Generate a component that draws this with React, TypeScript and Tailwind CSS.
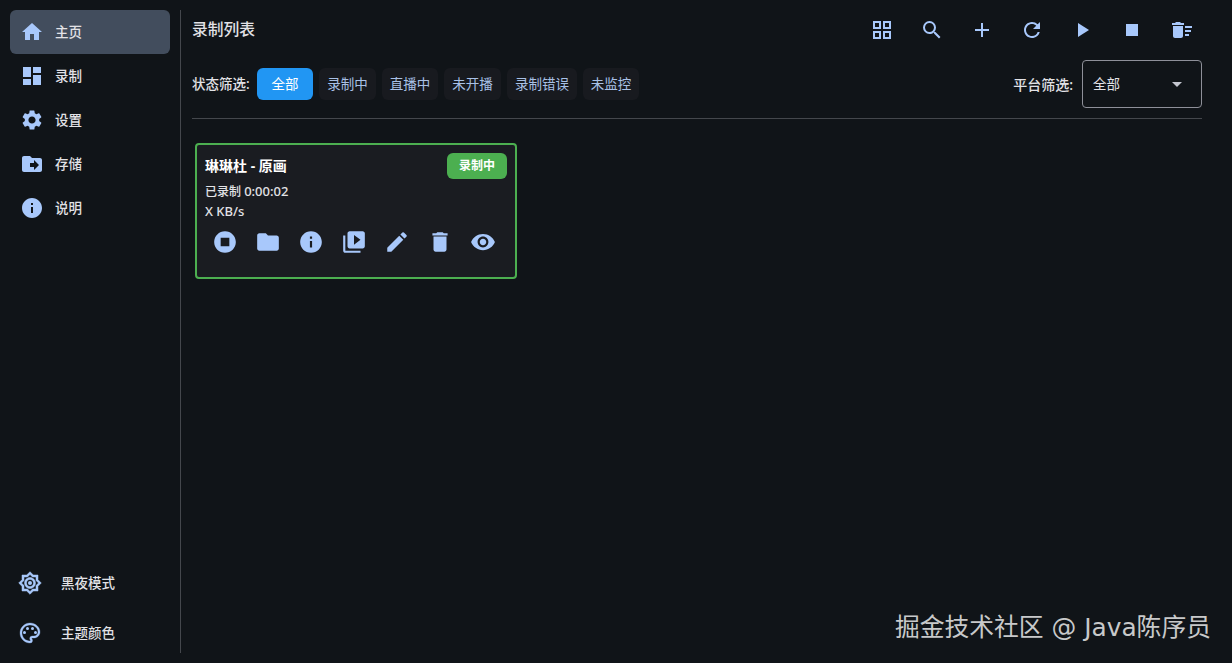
import { ReactNode } from "react";
import {
  MdAdd,
  MdArrowDropDown,
  MdDashboard,
  MdDelete,
  MdDeleteSweep,
  MdDriveFileMove,
  MdEdit,
  MdFolder,
  MdHome,
  MdInfo,
  MdOutlineBrightness7,
  MdOutlineGridView,
  MdOutlinePalette,
  MdPlayArrow,
  MdRefresh,
  MdSearch,
  MdSettings,
  MdStop,
  MdStopCircle,
  MdVideoLibrary,
  MdVisibility,
} from "react-icons/md";

const navItems = [
  { label: "主页", icon: <MdHome size={24} />, active: true },
  { label: "录制", icon: <MdDashboard size={24} /> },
  { label: "设置", icon: <MdSettings size={24} /> },
  { label: "存储", icon: <MdDriveFileMove size={24} /> },
  { label: "说明", icon: <MdInfo size={24} /> },
];

const toolbarIcons = [
  <MdOutlineGridView size={24} />,
  <MdSearch size={24} />,
  <MdAdd size={24} />,
  <MdRefresh size={24} />,
  <MdPlayArrow size={24} />,
  <MdStop size={24} />,
  <MdDeleteSweep size={24} />,
];

const cardIcons = [
  <MdStopCircle size={26} />,
  <MdFolder size={26} />,
  <MdInfo size={26} />,
  <MdVideoLibrary size={26} />,
  <MdEdit size={26} />,
  <MdDelete size={26} />,
  <MdVisibility size={26} />,
];

const filters = [
  { label: "全部", width: "w-[56px]" },
  { label: "录制中", width: "w-[57px]" },
  { label: "直播中", width: "w-[56px]" },
  { label: "未开播", width: "w-[57px]" },
  { label: "录制错误", width: "w-[70px]" },
  { label: "未监控", width: "w-[56px]" },
];

function IconSlot({ children, className }: { children: ReactNode; className: string }) {
  return <div className={`flex items-center justify-center text-[#a8c8fb] ${className}`}>{children}</div>;
}

export default function App() {
  return (
    <div
      className="relative flex h-[663px] w-[1232px] overflow-hidden bg-[#101418] p-[10px] text-[13.5px] text-[#e2e2e6]"
      style={{ fontFamily: '"Noto Sans", "Noto Sans CJK SC", sans-serif' }}
    >
      <aside className="flex h-[643px] w-[171px] shrink-0 flex-col border-r border-[#44474c] pr-[10px]">
        <nav className="flex flex-col">
          {navItems.map((item) => (
            <div
              key={item.label}
              className={`flex h-[44px] items-center rounded-md pl-[10px] ${item.active ? "bg-[#424d5d]" : ""}`}
            >
              <IconSlot className="w-[24px]">{item.icon}</IconSlot>
              <span className="ml-[11px] pt-[1px] font-medium leading-none">{item.label}</span>
            </div>
          ))}
        </nav>
        <div className="mb-[-5px] mt-auto flex flex-col">
          <div className="flex h-[50px] items-center pl-[8px]">
            <IconSlot className="w-[24px]">
              <MdOutlineBrightness7
                size={26}
                className="[&_path:not([fill=none])]:stroke-current [&_path:not([fill=none])]:stroke-[0.5]"
              />
            </IconSlot>
            <span className="ml-[19px] pt-[1px] font-medium leading-none">黑夜模式</span>
          </div>
          <div className="flex h-[50px] items-center pl-[8px]">
            <IconSlot className="w-[24px]">
              <MdOutlinePalette
                size={26}
                className="[&_path:not([fill=none])]:stroke-current [&_path:not([fill=none])]:stroke-[0.3]"
              />
            </IconSlot>
            <span className="ml-[19px] pt-[1px] font-medium leading-none">主题颜色</span>
          </div>
        </div>
      </aside>

      <main className="ml-[11px] flex w-[1010px] flex-col">
        <header className="flex h-[40px] items-center justify-between">
          <h1 className="text-[15.75px] font-medium leading-none">录制列表</h1>
          <div className="mr-[-5px] flex">
            {toolbarIcons.map((icon, i) => (
              <IconSlot key={i} className="h-[40px] w-[50px]">
                {icon}
              </IconSlot>
            ))}
          </div>
        </header>

        <div className="mt-[10px] flex h-[48px] items-center">
          <span className="w-[65px] shrink-0 pt-[1px] font-medium leading-none">状态筛选:</span>
          <div className="flex gap-[6px]">
            {filters.map((f, i) => (
              <div
                key={f.label}
                className={`flex h-[32px] items-center justify-center rounded-md ${f.width} ${
                  i === 0 ? "bg-[#2196f3] text-white" : "bg-[#181a1f] text-[#a9c1e6]"
                }`}
              >
                {f.label}
              </div>
            ))}
          </div>
          <span className="ml-auto mr-[9px] pt-[1px] text-[14px] font-medium leading-none">平台筛选:</span>
          <div className="flex h-[48px] w-[120px] items-center justify-between rounded border border-[#8e9099] pl-[10px] pr-[16px]">
            <span className="pt-[1px]">全部</span>
            <MdArrowDropDown size={24} className="mr-[-4px] text-[#c4c6cf]" />
          </div>
        </div>

        <div className="mt-[10px] h-px bg-[#44474c]" />

        <section className="ml-[3px] mt-[24px] flex h-[136px] w-[322px] flex-col rounded border-2 border-[#4caf50] bg-[#1a1c21] px-[8px] pt-[8px]">
          <div className="flex items-start justify-between">
            <span className="mt-[3px] text-[14px] font-bold leading-[20px] text-white">琳琳杜 - 原画</span>
            <span className="flex h-[26px] w-[60px] items-center justify-center rounded-md bg-[#4caf50] text-[12px] font-bold text-white">
              录制中
            </span>
          </div>
          <p className="mt-[2px] text-[12px] font-medium leading-[20px]">
            已录制 <span className="text-[13px]">0:00:02</span>
          </p>
          <p className="mt-[-1px] text-[13px] font-medium leading-[20px]">X KB/s</p>
          <div className="ml-[-2px] mt-[6px] flex">
            {cardIcons.map((icon, i) => (
              <IconSlot key={i} className="h-[30px] w-[43px]">
                {icon}
              </IconSlot>
            ))}
          </div>
        </section>
      </main>

      <span
        className="absolute bottom-[18px] right-[21px] text-[24.8px] leading-[34px] text-[#c8c9ca]"
        style={{ fontFamily: '"DejaVu Sans", "Noto Sans CJK SC", sans-serif' }}
      >
        掘金技术社区 @ Java陈序员
      </span>
    </div>
  );
}
